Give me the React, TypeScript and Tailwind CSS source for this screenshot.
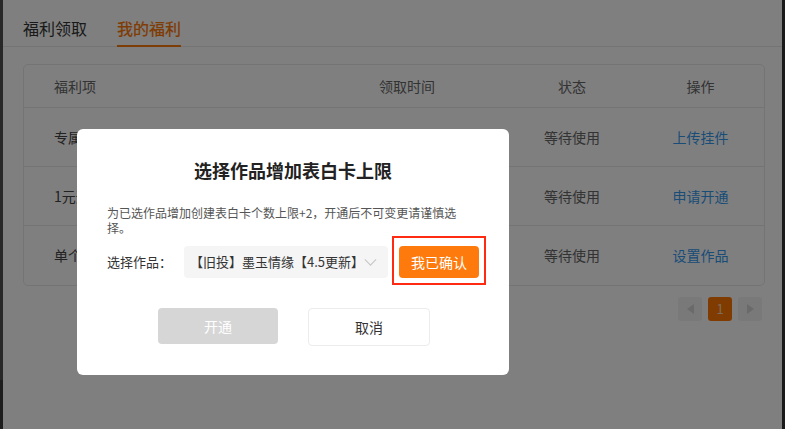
type Fuli = {
  id: number;
  mingcheng: string;
  shijian: string;
  zhuangtai: string;
  caozuo: string;
};

const fuliList: Fuli[] = [
  { id: 1, mingcheng: '专属头像挂件', shijian: '2023-04-12', zhuangtai: '等待使用', caozuo: '上传挂件' },
  { id: 2, mingcheng: '1元开通表白卡', shijian: '2023-04-12', zhuangtai: '等待使用', caozuo: '申请开通' },
  { id: 3, mingcheng: '单个作品上限+2', shijian: '2023-04-12', zhuangtai: '等待使用', caozuo: '设置作品' },
];

function Triangle({ dir }: Readonly<{ dir: 'left' | 'right' }>) {
  return (
    <svg width="7" height="10" viewBox="0 0 7 10" aria-hidden>
      {dir === 'left' ? <polygon points="7,0 7,10 0,5" fill="#d4d4d4" /> : <polygon points="0,0 0,10 7,5" fill="#d4d4d4" />}
    </svg>
  );
}

function MisFuli() {
  return (
    <div className="flex-1 flex flex-col bg-white">
      <div className="flex gap-[30px] px-[20px] border-b border-[#e9e9e9] h-[47px]">
        <div className="pt-[16px] text-[16px] leading-[24px] text-[#333]">福利领取</div>
        <div className="pt-[16px] text-[16px] leading-[24px] font-medium text-[#ff7a0c] border-b-2 border-[#ff7a0c] -mb-px">我的福利</div>
      </div>

      <div className="ml-[20px] mr-[17px] mt-[17px] border border-[#e8e8e8] rounded-[5px] text-[14px]">
        <div className="grid grid-cols-[283px_200px_130px_1fr] h-[43px] items-center border-b border-[#e8e8e8] text-[#666]">
          <div className="pl-[30px]">福利项</div>
          <div className="text-center">领取时间</div>
          <div className="text-center">状态</div>
          <div className="text-center">操作</div>
        </div>
        {fuliList.map((row, i) => (
          <div
            key={row.id}
            className={`grid grid-cols-[283px_200px_130px_1fr] h-[59px] items-center ${i < fuliList.length - 1 ? 'border-b border-[#e8e8e8]' : ''}`}
          >
            <div className="pl-[30px] text-[#444] whitespace-nowrap">{row.mingcheng}</div>
            <div className="text-center text-[#666]">{row.shijian}</div>
            <div className="text-center text-[#666]">{row.zhuangtai}</div>
            <div className="text-center text-[#3399ee]">{row.caozuo}</div>
          </div>
        ))}
      </div>

      <div className="flex justify-end gap-[6px] mr-[20px] mt-[11px]">
        <div className="w-[24px] h-[24px] rounded-[3px] bg-[#f3f3f3] flex items-center justify-center">
          <Triangle dir="left" />
        </div>
        <div className="w-[24px] h-[24px] rounded-[3px] bg-[#ff7600] flex items-center justify-center text-[13px] text-[#ffd9b0]">1</div>
        <div className="w-[24px] h-[24px] rounded-[3px] bg-[#f3f3f3] flex items-center justify-center">
          <Triangle dir="right" />
        </div>
      </div>
    </div>
  );
}

function ModalTuijian() {
  return (
    <div className="absolute left-[77px] top-[129px] w-[432px] bg-white rounded-[6px] px-[30px] pt-[29px] pb-[29px]">
      <h2 className="text-center text-[18px] leading-[24px] font-bold text-[#222]">选择作品增加表白卡上限</h2>
      <p className="mt-[23px] text-[12px] leading-[15px] text-[#555]">
        为已选作品增加创建表白卡个数上限+2，开通后不可变更请谨慎选择。
      </p>
      <div className="mt-[11px] flex items-center h-[32px]">
        <span className="text-[13px] text-[#333] w-[77px]">选择作品：</span>
        <div className="w-[204px] h-[32px] bg-[#f5f5f5] rounded-[4px] flex items-center pl-[6px] pr-[11px] text-[13px] text-[#333]">
          <span className="flex-1 whitespace-nowrap">【旧投】墨玉情缘【4.5更新】</span>
          <svg width="15" height="9" viewBox="0 0 15 9" aria-hidden>
            <polyline points="1,1 7.5,7.5 14,1" fill="none" stroke="#c8c8c8" strokeWidth="1.3" />
          </svg>
        </div>
        <div className="relative ml-[11px]">
          <button className="w-[80px] h-[32px] bg-[#ff7a0c] rounded-[4px] text-white text-[14px]">我已确认</button>
          <span className="absolute -left-[7px] -right-[7px] -top-[10px] -bottom-[7px] border-2 border-[#ff2a12] pointer-events-none" />
        </div>
      </div>
      <div className="mt-[30px] pl-[2px] flex justify-center items-start gap-[30px]">
        <button className="w-[120px] h-[36px] bg-[#d6d6d6] rounded-[4px] text-white text-[14px]">开通</button>
        <button className="w-[122px] h-[38px] bg-white border border-[#ececec] rounded-[4px] text-[#333] text-[14px]">取消</button>
      </div>
    </div>
  );
}

export default function App() {
  return (
    <div className="relative w-full h-screen overflow-hidden flex font-['Noto_Sans_CJK_SC',sans-serif]">
      <div className="w-[3px] flex flex-col">
        <div className="flex-1 bg-[#505050]" />
        <div className="h-[49px] bg-[#3a3a3a]" />
      </div>
      <MisFuli />
      <div className="w-[3px] bg-[#343434]" />
      <div className="absolute inset-0 bg-black/50" />
      <ModalTuijian />
    </div>
  );
}
